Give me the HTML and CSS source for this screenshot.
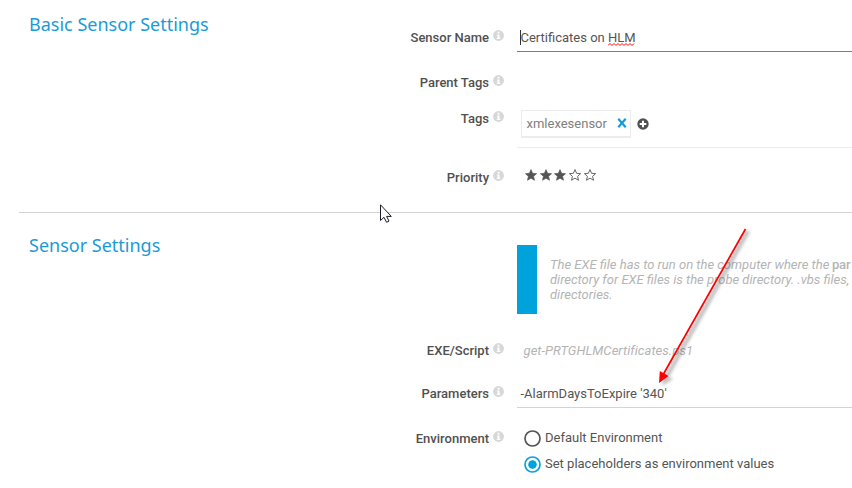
FILE: index.html
```html
<!DOCTYPE html>
<html lang="en">
<head>
<meta charset="utf-8">
<title>Sensor Settings</title>
<link rel="stylesheet" href="styles.css">
</head>
<body>
<svg class="defs" width="0" height="0" aria-hidden="true">
  <symbol id="info" viewBox="0 0 11 11"><circle cx="5.5" cy="5.5" r="5.4" fill="#d6d7d8"/><path d="M4.6 1.8h1.9v1.6H4.6zM3.9 4.4h2.6v3.4h.8v1.1H3.8V7.8h.8V5.5h-.7z" fill="#fff"/></symbol>
  <symbol id="star" viewBox="0 0 24 24"><path d="M12 1.2l3.2 7.4 8 .7-6 5.3 1.800 7.900-7-4.200-7 4.200 1.800-7.900-6-5.300 8-.7z"/></symbol>
</svg>
<main class="page">
  <section class="group basic">
    <h2 class="heading">Basic Sensor Settings</h2>
    <div class="fields">
      <div class="row name">
        <label class="label">Sensor Name</label><svg class="info"><use href="#info"/></svg>
        <div class="input focused"><span class="caret"></span><span>Certificates on <span class="typo">HLM<svg class="squiggle" viewBox="0 0 27 3"><path d="M0 2.500l2-2 2 2 2-2 2 2 2-2 2 2 2-2 2 2 2-2 2 2 2-2 2 2 2-2"/></svg></span></span></div>
      </div>
      <div class="row parent">
        <label class="label">Parent Tags</label><svg class="info"><use href="#info"/></svg>
      </div>
      <div class="row tags">
        <label class="label">Tags</label><svg class="info"><use href="#info"/></svg>
        <div class="taglist">
          <span class="tag"><span>xmlexesensor</span><svg class="remove" viewBox="0 0 10 10"><path d="M1.300 .8l7.400 8.400M8.700 .8L1.300 9.200"/></svg></span>
          <svg class="add" viewBox="0 0 12 12"><circle cx="6" cy="6" r="5.700"/><path d="M6 2.700v6.600M2.700 6h6.600"/></svg>
        </div>
      </div>
      <div class="row priority">
        <label class="label">Priority</label><svg class="info"><use href="#info"/></svg>
        <div class="stars"><svg class="star"><use href="#star"/></svg><svg class="star"><use href="#star"/></svg><svg class="star"><use href="#star"/></svg><svg class="star empty"><use href="#star"/></svg><svg class="star empty"><use href="#star"/></svg></div>
      </div>
    </div>
  </section>
  <section class="group sensor">
    <h2 class="heading">Sensor Settings</h2>
    <div class="fields">
      <div class="note"><p>The EXE file has to run on the computer where the <b>par</b><br>directory for EXE files is the probe directory. .vbs files,<br>directories.</p></div>
      <div class="row script">
        <label class="label">EXE/Script</label><svg class="info"><use href="#info"/></svg>
        <div class="readonly">get-PRTGHLMCertificates.ps1</div>
      </div>
      <div class="row params">
        <label class="label">Parameters</label><svg class="info"><use href="#info"/></svg>
        <div class="input"><span>-AlarmDaysToExpire '340'</span></div>
      </div>
      <div class="row env">
        <label class="label">Environment</label><svg class="info"><use href="#info"/></svg>
        <div class="radios">
          <div class="option"><svg class="radio" viewBox="0 0 17 17"><circle cx="8.500" cy="8.500" r="7.500"/></svg><span>Default Environment</span></div>
          <div class="option"><svg class="radio checked" viewBox="0 0 17 17"><circle cx="8.500" cy="8.500" r="7.500"/><circle class="dot" cx="8.500" cy="8.500" r="4.300"/></svg><span>Set placeholders as environment values</span></div>
        </div>
      </div>
    </div>
  </section>
  <svg class="annotation" viewBox="0 0 852 488" aria-hidden="true">
    <filter id="soft" x="-20%" y="-20%" width="140%" height="140%"><feGaussianBlur stdDeviation="1.500"/></filter>
    <g filter="url(#soft)" opacity=".32"><path d="M748 231L667 376" stroke="#444" stroke-width="4.500"/><path d="M662 386l2-12 9 5z" fill="#444"/></g>
    <path d="M745.500 229L663.500 374" stroke="#f00" stroke-width="1.700"/>
    <path d="M659 383l.8-12 8.700 5z" fill="#f00"/>
  </svg>
  <svg class="cursor" viewBox="0 0 13 20" aria-hidden="true"><path d="M.5.800v15.700l3.500-3.200 2.600 5 2.400-1.200-2.400-4.700h4.700z"/></svg>
</main>
</body>
</html>
```

FILE: styles.css
```css
* { box-sizing: border-box; }
body { margin: 0; background: #fff; color: #555; font: 13px/20px Roboto, sans-serif; }
.defs { position: absolute; }
.page { position: relative; width: 852px; height: 488px; overflow: hidden; }
.group { display: flex; margin-left: 19px; }
.basic { height: 213px; border-bottom: 1px solid #d4d4d4; }
.sensor { height: 275px; }
.heading { width: 370px; flex: none; margin: 0; padding: 12px 0 0 10px; color: #1a9bd7; font: 400 18px/25px "Noto Sans", sans-serif; }
.sensor .heading { padding-top: 20px; }
.fields { flex: 1; min-width: 0; }
.row { display: flex; align-items: flex-start; }
.label { width: 100px; flex: none; text-align: right; font-weight: 500; color: #505050; }
.info { width: 11px; height: 11px; flex: none; margin: 2px 13px 0 4px; }
.name { margin-top: 28px; height: 45px; }
.parent { height: 36px; }
.tags { height: 59px; }
.priority { height: 30px; }
.input { position: relative; flex: 1; height: 24px; padding-left: 3.500px; border-bottom: 1px solid #d4d4d4; white-space: nowrap; }
.input.focused { border-color: #1a9fd6; }
.caret { position: absolute; left: 3px; top: 2px; width: 1px; height: 15px; background: #333; }
.typo { position: relative; }
.squiggle { position: absolute; left: 0; bottom: -1px; width: 27px; height: 3px; fill: none; stroke: #f00; stroke-width: 1; }
.taglist { display: flex; flex: 1; height: 39px; padding: 1px 0 0 4px; border-bottom: 1px solid #ebebeb; }
.tag { display: flex; align-items: center; justify-content: space-between; width: 110px; height: 28px; padding: 0 3.500px 0 4.500px; border: 1px solid #ececec; border-bottom-width: 2px; color: #808080; }
.remove { width: 10px; height: 10px; margin-bottom: 1px; fill: none; stroke: #159bd7; stroke-width: 2.200; }
.add { width: 12px; height: 12px; margin: 7.500px 0 0 6px; fill: #505050; }
.add path { stroke: #fff; stroke-width: 2; }
.stars { display: flex; gap: 2.700px; padding: 1px 0 0 8px; }
.star { width: 12px; height: 12px; fill: #555; stroke: #555; stroke-width: 1.300; overflow: visible; }
.star.empty { fill: none; stroke-width: 1.800; }
.note { display: flex; align-items: center; margin: 32px 0 0 128px; height: 69px; border-left: 20px solid #00a2dc; padding-left: 13px; color: #b4b4b4; font-style: italic; line-height: 15px; white-space: nowrap; }
.note p { margin: 0; }
.note b { font-weight: 500; font-style: normal; letter-spacing: -.2px; }
.note b { margin-left: -.5px; }
.script { margin-top: 27px; height: 43px; }
.readonly { padding-left: 6.500px; color: #b4b4b4; font-style: italic; letter-spacing: .05px; }
.params { height: 45px; }
.env { height: 50px; }
.radios { display: flex; flex-direction: column; gap: 6px; padding-left: 7px; margin-top: -1px; }
.option { display: flex; align-items: center; gap: 4px; height: 20px; white-space: nowrap; }
.radio { width: 17px; height: 17px; fill: none; stroke: #555; stroke-width: 1.700; }
.radio.checked { stroke: #0da1dc; }
.radio .dot { fill: #00a2dc; stroke: none; }
.annotation { position: absolute; inset: 0; width: 852px; height: 488px; fill: none; }
.cursor { position: absolute; left: 380px; top: 204px; width: 13px; height: 20px; fill: #fff; stroke: #1c1c2b; stroke-width: 1; }
```
